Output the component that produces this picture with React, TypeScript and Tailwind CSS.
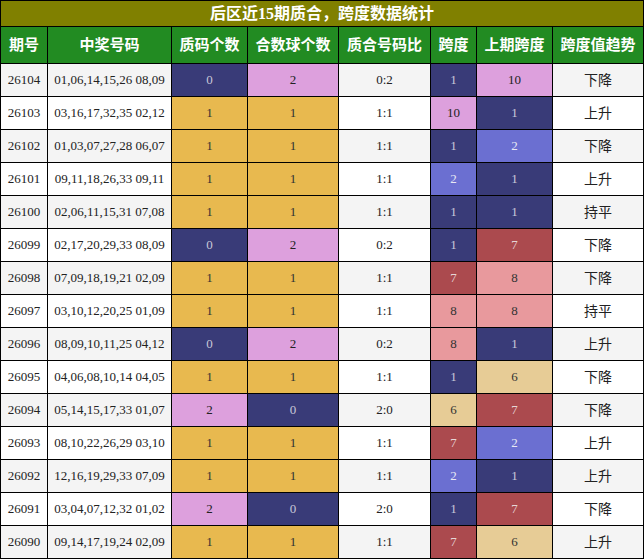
const rows: [string, string, number, number, string, number, number, string][] = [
  ['26104', '01,06,14,15,26 08,09', 0, 2, '0:2', 1, 10, '下降'],
  ['26103', '03,16,17,32,35 02,12', 1, 1, '1:1', 10, 1, '上升'],
  ['26102', '01,03,07,27,28 06,07', 1, 1, '1:1', 1, 2, '下降'],
  ['26101', '09,11,18,26,33 09,11', 1, 1, '1:1', 2, 1, '上升'],
  ['26100', '02,06,11,15,31 07,08', 1, 1, '1:1', 1, 1, '持平'],
  ['26099', '02,17,20,29,33 08,09', 0, 2, '0:2', 1, 7, '下降'],
  ['26098', '07,09,18,19,21 02,09', 1, 1, '1:1', 7, 8, '下降'],
  ['26097', '03,10,12,20,25 01,09', 1, 1, '1:1', 8, 8, '持平'],
  ['26096', '08,09,10,11,25 04,12', 0, 2, '0:2', 8, 1, '上升'],
  ['26095', '04,06,08,10,14 04,05', 1, 1, '1:1', 1, 6, '下降'],
  ['26094', '05,14,15,17,33 01,07', 2, 0, '2:0', 6, 7, '下降'],
  ['26093', '08,10,22,26,29 03,10', 1, 1, '1:1', 7, 2, '上升'],
  ['26092', '12,16,19,29,33 07,09', 1, 1, '1:1', 2, 1, '上升'],
  ['26091', '03,04,07,12,32 01,02', 2, 0, '2:0', 1, 7, '下降'],
  ['26090', '09,14,17,19,24 02,09', 1, 1, '1:1', 7, 6, '上升'],
]

const countColor: Record<number, string> = {
  0: 'bg-[#393b78] text-[#c8c8d8]',
  1: 'bg-[#e8b94f] text-[#333]',
  2: 'bg-[#dda0dd] text-[#222]',
}

const spanColor: Record<number, string> = {
  1: 'bg-[#393b78] text-[#c8c8d8]',
  2: 'bg-[#6b6fd1] text-[#e8e8f4]',
  6: 'bg-[#e7cc96] text-[#333]',
  7: 'bg-[#ab4a4e] text-[#e6d6d6]',
  8: 'bg-[#e8999d] text-[#333]',
  10: 'bg-[#dda0dd] text-[#222]',
}

const headers = ['期号', '中奖号码', '质码个数', '合数球个数', '质合号码比', '跨度', '上期跨度', '跨度值趋势']

export default function App() {
  return (
    <div className="w-[644px] font-['Liberation_Serif','Noto_Sans_CJK_SC',serif]">
      <div className="grid grid-cols-[46px_123px_75px_90px_91px_45px_75px_90px] gap-px bg-black p-px">
        <div className="col-span-8 h-[25px] bg-[#808000] flex items-center justify-center text-white font-bold text-[16px]">
          后区近15期质合，跨度数据统计
        </div>
        {headers.map((h) => (
          <div
            key={h}
            className="h-[36px] bg-[#228b22] flex items-center justify-center text-white font-bold text-[15px]"
          >
            {h}
          </div>
        ))}
        {rows.map((r, i) => {
          const base = i % 2 === 0 ? 'bg-[#f4f4f4]' : 'bg-white'
          const cell = 'h-[32px] flex items-center justify-center'
          return [
            <div key={r[0] + 'a'} className={`${cell} ${base} text-[13px] text-[#222]`}>{r[0]}</div>,
            <div key={r[0] + 'b'} className={`${cell} ${base} text-[13px] text-[#222]`}>{r[1]}</div>,
            <div key={r[0] + 'c'} className={`${cell} ${countColor[r[2]]} text-[13px]`}>{r[2]}</div>,
            <div key={r[0] + 'd'} className={`${cell} ${countColor[r[3]]} text-[13px]`}>{r[3]}</div>,
            <div key={r[0] + 'e'} className={`${cell} ${base} text-[13px] text-[#222]`}>{r[4]}</div>,
            <div key={r[0] + 'f'} className={`${cell} ${spanColor[r[5]]} text-[13px]`}>{r[5]}</div>,
            <div key={r[0] + 'g'} className={`${cell} ${spanColor[r[6]]} text-[13px]`}>{r[6]}</div>,
            <div key={r[0] + 'h'} className={`${cell} ${base} text-[14px] text-[#222]`}>{r[7]}</div>,
          ]
        })}
      </div>
    </div>
  )
}
